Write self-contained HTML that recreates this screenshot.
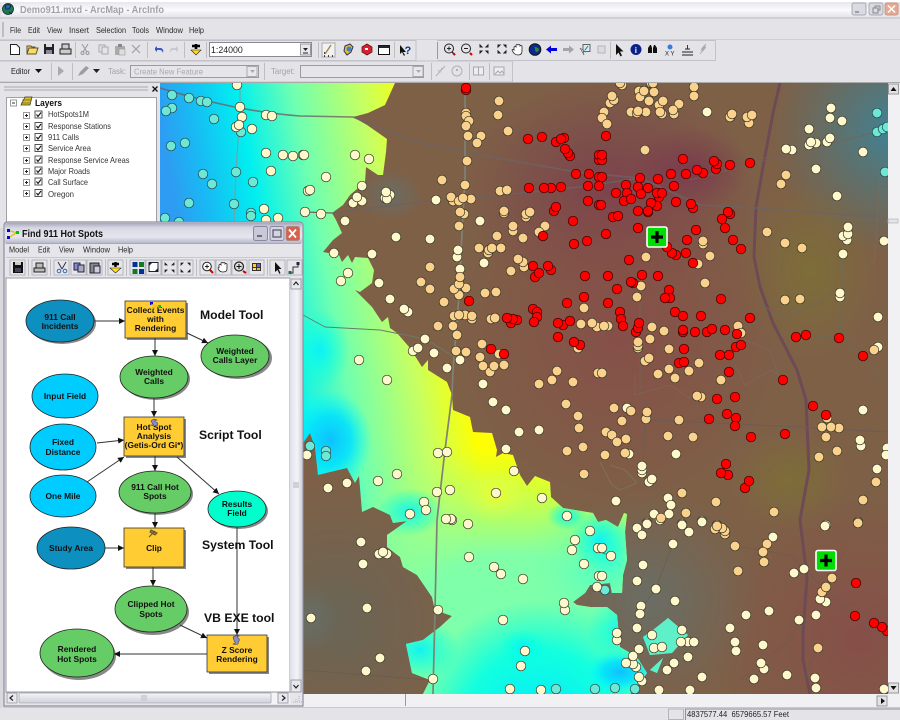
<!DOCTYPE html>
<html><head><meta charset="utf-8"><title>Demo911.mxd - ArcMap - ArcInfo</title>
<style>
html,body{margin:0;padding:0;background:#e4e3e8;width:900px;height:720px;overflow:hidden}
svg{display:block;filter:blur(.35px)}
text{font-family:"Liberation Sans",sans-serif;fill:#222}
.r circle{r:4.8px;fill:#f00;stroke:#300;stroke-width:.7}
.t circle{r:4.8px;fill:#fad28e;stroke:#332;stroke-width:.7}
.c circle{r:4.8px;fill:#fff8cc;stroke:#332;stroke-width:.7}
.y circle{r:4.8px;fill:#6ee8d6;stroke:#244;stroke-width:.7}
.mn text{font-size:8.6px;fill:#2a2a2a}
.tr text{font-size:8.2px;fill:#333}
.nd{font-size:8.4px;font-weight:bold;text-anchor:middle;fill:#111}
.lb{font-size:12.2px;font-weight:bold;fill:#111}
.ar{stroke:#333;stroke-width:1;fill:none;marker-end:url(#ah)}
.sh{fill:#888}
.e{stroke:#222;stroke-width:.8}
.b{fill:#ffcc33;stroke:#333;stroke-width:.8}
.tb{fill:#e6e6ea;stroke:#a9a9b2;stroke-width:.8}
</style></head><body>
<svg width="900" height="720" viewBox="0 0 900 720" xmlns="http://www.w3.org/2000/svg">
<defs>
<linearGradient id="sf" gradientUnits="userSpaceOnUse" x1="170" y1="180" x2="440" y2="130">
<stop offset="0" stop-color="#2e9cf2"/><stop offset=".12" stop-color="#18baf4"/><stop offset=".3" stop-color="#00f0f0"/><stop offset=".5" stop-color="#70ffb0"/><stop offset=".75" stop-color="#c8ff60"/><stop offset=".93" stop-color="#ffff00"/><stop offset="1" stop-color="#ffff00"/>
</linearGradient>
<radialGradient id="mint" gradientUnits="userSpaceOnUse" cx="510" cy="690" r="245"><stop offset="0" stop-color="#78ffb0"/><stop offset=".55" stop-color="#80ffa8"/><stop offset="1" stop-color="#a0ff80" stop-opacity="0"/></radialGradient>
<radialGradient id="mint2" gradientUnits="userSpaceOnUse" cx="610" cy="560" r="90"><stop offset="0" stop-color="#40ffd0"/><stop offset="1" stop-color="#80ffa8" stop-opacity="0"/></radialGradient>
<radialGradient id="cybot" gradientUnits="userSpaceOnUse" cx="540" cy="725" r="125"><stop offset="0" stop-color="#00e8ff"/><stop offset=".6" stop-color="#00ffe8" stop-opacity=".85"/><stop offset="1" stop-color="#00ffe0" stop-opacity="0"/></radialGradient>
<radialGradient id="cy"><stop offset="0" stop-color="#00f0ff" stop-opacity=".85"/><stop offset=".55" stop-color="#00ffe8" stop-opacity=".45"/><stop offset="1" stop-color="#00ffe0" stop-opacity="0"/></radialGradient>
<radialGradient id="bl"><stop offset="0" stop-color="#10c0ff"/><stop offset=".5" stop-color="#00e0ff" stop-opacity=".85"/><stop offset="1" stop-color="#00ffff" stop-opacity="0"/></radialGradient>
<radialGradient id="yl"><stop offset="0" stop-color="#eaff30"/><stop offset="1" stop-color="#d0ff60" stop-opacity="0"/></radialGradient>
<radialGradient id="rd"><stop offset="0" stop-color="#7a2e50" stop-opacity=".62"/><stop offset="1" stop-color="#7a2e50" stop-opacity="0"/></radialGradient>
<radialGradient id="rb"><stop offset="0" stop-color="#884c48" stop-opacity=".85"/><stop offset="1" stop-color="#884c48" stop-opacity="0"/></radialGradient>
<radialGradient id="rbU" gradientUnits="userSpaceOnUse" cx="860" cy="640" r="150"><stop offset="0" stop-color="#884c48" stop-opacity=".85"/><stop offset="1" stop-color="#884c48" stop-opacity="0"/></radialGradient>
<radialGradient id="bgU" gradientUnits="userSpaceOnUse" cx="895" cy="130" r="125"><stop offset="0" stop-color="#3e8398"/><stop offset="1" stop-color="#4a7a80" stop-opacity="0"/></radialGradient>
<radialGradient id="gyU" gradientUnits="userSpaceOnUse" cx="335" cy="620" r="140"><stop offset="0" stop-color="#666658" stop-opacity=".85"/><stop offset="1" stop-color="#666658" stop-opacity="0"/></radialGradient>
<radialGradient id="gy"><stop offset="0" stop-color="#66706a" stop-opacity=".85"/><stop offset="1" stop-color="#66706a" stop-opacity="0"/></radialGradient>
<radialGradient id="ol"><stop offset="0" stop-color="#7c7432" stop-opacity=".7"/><stop offset="1" stop-color="#7c7432" stop-opacity="0"/></radialGradient>
<clipPath id="mc"><rect x="160" y="83" width="728" height="611"/></clipPath>
<clipPath id="pc"><path d="M160 83H395L385 105 368 113 353 117 367 125 387 139 386 152 383 175 378 175 366 167 365 182 350 195 343 205 332 213 336 220 342 233 333 240 323 252 339 255 342 262 348 255 352 263 355 257 368 258 374 270 372 283 360 292 355 290 372 307 382 322 388 317 390 328 397 333 410 348 422 367 428 360 428 370 447 382 452 395 453 410 470 417 473 432 492 433 497 450 496 457 503 453 513 455 520 475 527 486 535 476 550 482 551 497 563 508 593 513 598 522 606 520 618 527 624 513 627 514 625 532 627 560 623 575 622 593 612 593 610 583 590 585 585 593 573 602 577 605 590 607 607 607 617 615 620 647 637 657 647 673 637 687 630 694H423L430 680 412 673 406 644 423 640 440 627 452 616 435 610 432 597 417 575 403 567 400 557 387 547 387 535 407 521 393 523 390 515 373 507 362 512 359 476 355 483 347 468 330 472 318 475 315 447 310 433 303 443 160 445ZM668 618L688 635 672 653 650 655 643 637 653 630ZM663 658L650 670 657 673Z"/></clipPath>
<marker id="ah" markerWidth="7" markerHeight="7" refX="6" refY="3" orient="auto" markerUnits="userSpaceOnUse"><path d="M0 0L6 3 0 6Z" fill="#111"/></marker>
<linearGradient id="tt" x1="0" y1="0" x2="0" y2="1"><stop offset="0" stop-color="#e6e6ee"/><stop offset=".5" stop-color="#fbfbfd"/><stop offset="1" stop-color="#e0e0e8"/></linearGradient>
<linearGradient id="wt" x1="0" y1="0" x2="0" y2="1"><stop offset="0" stop-color="#a8a8be"/><stop offset=".25" stop-color="#d8d8e4"/><stop offset=".7" stop-color="#e6e6ee"/><stop offset="1" stop-color="#b8b8cc"/></linearGradient>
<linearGradient id="vb" x1="0" y1="0" x2="1" y2="0"><stop offset="0" stop-color="#dfe0e8"/><stop offset=".6" stop-color="#f4f4f8"/><stop offset="1" stop-color="#d0d0da"/></linearGradient>
<linearGradient id="hb" x1="0" y1="0" x2="0" y2="1"><stop offset="0" stop-color="#f4f4f8"/><stop offset="1" stop-color="#d0d0da"/></linearGradient>
</defs>

<!-- MAP -->
<g clip-path="url(#mc)">
<rect x="160" y="83" width="728" height="611" fill="#7e6047"/>
<ellipse cx="610" cy="190" rx="150" ry="115" fill="url(#rd)"/>
<ellipse cx="690" cy="170" rx="60" ry="42" fill="url(#rd)"/>
<ellipse cx="620" cy="330" rx="170" ry="180" fill="url(#rb)"/>
<rect x="710" y="490" width="178" height="204" fill="url(#rbU)"/>
<rect x="770" y="83" width="118" height="175" fill="url(#bgU)"/>
<rect x="195" y="480" width="280" height="214" fill="url(#gyU)"/>
<ellipse cx="650" cy="600" rx="110" ry="110" fill="url(#gy)"/>
<ellipse cx="390" cy="195" rx="32" ry="26" fill="url(#gy)"/>
<ellipse cx="311" cy="618" rx="28" ry="34" fill="url(#gy)"/>
<ellipse cx="810" cy="270" rx="70" ry="90" fill="url(#ol)"/>
<ellipse cx="790" cy="480" rx="60" ry="50" fill="url(#ol)"/>
<g clip-path="url(#pc)">
<rect x="160" y="83" width="480" height="611" fill="url(#sf)"/>
<rect x="265" y="445" width="490" height="249" fill="url(#mint)"/>
<rect x="520" y="470" width="180" height="180" fill="url(#mint2)"/>
<rect x="415" y="600" width="240" height="94" fill="url(#cybot)"/>
<rect x="640" y="615" width="50" height="60" fill="#5ef0c8"/>
<ellipse cx="620" cy="672" rx="34" ry="22" fill="url(#bl)"/>
<ellipse cx="622" cy="630" rx="36" ry="30" fill="url(#cy)"/>
<ellipse cx="420" cy="650" rx="40" ry="30" fill="url(#cy)"/>
<ellipse cx="330" cy="440" rx="42" ry="50" fill="url(#bl)"/>
<ellipse cx="320" cy="350" rx="30" ry="40" fill="url(#cy)"/>
<ellipse cx="410" cy="512" rx="34" ry="24" fill="url(#cy)"/>
<ellipse cx="567" cy="516" rx="20" ry="14" fill="url(#cy)"/>
<ellipse cx="600" cy="540" rx="30" ry="30" fill="url(#cy)"/>
<ellipse cx="523" cy="647" rx="24" ry="18" fill="url(#cy)"/>
<ellipse cx="496" cy="495" rx="36" ry="26" fill="url(#yl)"/>
</g>
<!-- roads -->
<g fill="none" stroke-linejoin="round">
<path d="M780 83L773 113 763 167 756 207 754 257 760 287 773 323 797 370 806 400 809 470 800 520 807 577 803 633 803 660 810 694" stroke="#6e4a55" stroke-width="3"/>
<path d="M160 88Q240 112 300 116L353 117 410 140 465 152 575 172 640 178 700 205 756 208 888 218" stroke="#6b6466" stroke-width="1.6" opacity=".8"/>
<path d="M465 88L465 180 463 212 459 295 453 370 452 395 445 450 437 520 435 610 433 694" stroke="#7f8276" stroke-width="1.7"/>
<path d="M240 85L240 107 238 140 236 172 234 222" stroke="#6aa8a8" stroke-width="1.2"/>
<path d="M305 212L332 213 436 200 500 195 580 187 640 178" stroke="#6a6264" stroke-width="1.2"/>
<path d="M303 315L325 327 380 330 425 339 460 360" stroke="#6c7a68" stroke-width=".9"/>
<path d="M303 670L430 680" stroke="#6a5a50" stroke-width=".7"/>
<path d="M877 132L690 180M786 150L760 160" stroke="#7a6058" stroke-width=".8"/>
<path d="M847 215L843 254 840 338 863 356 885 385M806 335L839 338M757 300L775 315 800 312 840 290M720 340L760 320M640 290L640 395" stroke="#6a6a5c" stroke-width=".7"/>
<path d="M735 546L790 555 826 590 855 616 888 640M673 544L655 590 640 610M740 680L790 640 800 620M816 648L805 680M845 550L826 585M600 552L611 556" stroke="#6e5a50" stroke-width=".7"/>
<path d="M745 340L770 350 778 375 772 370 745 385 735 365M635 375L635 395 670 385 690 398M880 170L875 260 865 270" stroke="#7f6a5c" stroke-width=".6"/>
<path d="M645 400L645 418 643 470M650 420L800 427 886 432" stroke="#6c5c56" stroke-width=".9"/>
<path d="M880 462L863 500 858 522M650 485L670 502 700 522" stroke="#6e6250" stroke-width=".7"/>
<path d="M610 465L625 470 637 483 620 490 612 485 600 462" stroke="#7c7f60" stroke-width=".6"/>
</g>
<g class="y"><circle cx="172" cy="95"/><circle cx="189" cy="98"/><circle cx="201" cy="101"/><circle cx="207" cy="102"/><circle cx="172" cy="108"/><circle cx="166" cy="111"/><circle cx="214" cy="119"/><circle cx="171" cy="146"/><circle cx="185" cy="143"/><circle cx="203" cy="174"/><circle cx="212" cy="184"/><circle cx="236" cy="172"/><circle cx="253" cy="182"/><circle cx="189" cy="203"/><circle cx="234" cy="204"/><circle cx="251" cy="213"/><circle cx="251" cy="216"/><circle cx="165" cy="218"/><circle cx="179" cy="222"/><circle cx="241" cy="132"/><circle cx="877" cy="113"/><circle cx="877" cy="132"/><circle cx="883" cy="129"/><circle cx="887" cy="127"/><circle cx="885" cy="172"/><circle cx="310" cy="446"/><circle cx="326" cy="451"/><circle cx="326" cy="456"/><circle cx="615" cy="688"/><circle cx="635" cy="689"/><circle cx="605" cy="590"/><circle cx="556" cy="689"/><circle cx="595" cy="689"/></g>
<g class="c"><circle cx="237" cy="85"/><circle cx="240" cy="107"/><circle cx="242" cy="117"/><circle cx="236" cy="127"/><circle cx="239" cy="125"/><circle cx="252" cy="129"/><circle cx="266" cy="115"/><circle cx="272" cy="116"/><circle cx="266" cy="153"/><circle cx="283" cy="155"/><circle cx="293" cy="156"/><circle cx="303" cy="155"/><circle cx="271" cy="171"/><circle cx="308" cy="191"/><circle cx="305" cy="212"/><circle cx="264" cy="209"/><circle cx="266" cy="220"/><circle cx="278" cy="218"/><circle cx="304" cy="155"/><circle cx="355" cy="155"/><circle cx="369" cy="159"/><circle cx="326" cy="177"/><circle cx="310" cy="190"/><circle cx="362" cy="186"/><circle cx="353" cy="203"/><circle cx="362" cy="201"/><circle cx="357" cy="197"/><circle cx="390" cy="195"/><circle cx="385" cy="198"/><circle cx="387" cy="199"/><circle cx="386" cy="192"/><circle cx="436" cy="200"/><circle cx="321" cy="214"/><circle cx="345" cy="221"/><circle cx="480" cy="221"/><circle cx="396" cy="237"/><circle cx="430" cy="239"/><circle cx="334" cy="253"/><circle cx="372" cy="254"/><circle cx="457" cy="257"/><circle cx="458" cy="250"/><circle cx="484" cy="263"/><circle cx="460" cy="269"/><circle cx="348" cy="273"/><circle cx="341" cy="281"/><circle cx="379" cy="283"/><circle cx="390" cy="299"/><circle cx="408" cy="312"/><circle cx="404" cy="309"/><circle cx="425" cy="339"/><circle cx="413" cy="351"/><circle cx="418" cy="348"/><circle cx="434" cy="353"/><circle cx="460" cy="360"/><circle cx="359" cy="360"/><circle cx="387" cy="380"/><circle cx="447" cy="368"/><circle cx="483" cy="384"/>
<circle cx="707" cy="112"/><circle cx="831" cy="108"/><circle cx="830" cy="118"/><circle cx="842" cy="121"/><circle cx="809" cy="129"/><circle cx="827" cy="142"/><circle cx="830" cy="138"/><circle cx="809" cy="145"/><circle cx="816" cy="143"/><circle cx="811" cy="142"/><circle cx="792" cy="150"/><circle cx="786" cy="149"/><circle cx="863" cy="152"/><circle cx="816" cy="169"/><circle cx="837" cy="196"/><circle cx="847" cy="240"/><circle cx="843" cy="236"/><circle cx="848" cy="234"/><circle cx="848" cy="227"/><circle cx="843" cy="254"/><circle cx="884" cy="241"/><circle cx="840" cy="297"/><circle cx="840" cy="293"/><circle cx="878" cy="317"/><circle cx="878" cy="347"/>
<circle cx="627" cy="408"/><circle cx="629" cy="454"/><circle cx="676" cy="454"/><circle cx="863" cy="410"/><circle cx="861" cy="446"/><circle cx="860" cy="440"/><circle cx="887" cy="448"/><circle cx="886" cy="455"/><circle cx="877" cy="469"/><circle cx="642" cy="473"/><circle cx="642" cy="470"/><circle cx="642" cy="466"/><circle cx="649" cy="482"/><circle cx="652" cy="479"/><circle cx="616" cy="501"/><circle cx="668" cy="498"/><circle cx="671" cy="505"/><circle cx="654" cy="514"/><circle cx="669" cy="514"/><circle cx="647" cy="523"/><circle cx="682" cy="524"/><circle cx="702" cy="521"/><circle cx="826" cy="525"/>
<circle cx="493" cy="402"/><circle cx="506" cy="410"/><circle cx="519" cy="432"/><circle cx="539" cy="430"/><circle cx="506" cy="449"/><circle cx="514" cy="471"/><circle cx="542" cy="498"/><circle cx="567" cy="516"/><circle cx="590" cy="531"/><circle cx="575" cy="540"/><circle cx="572" cy="550"/><circle cx="598" cy="548"/><circle cx="584" cy="564"/><circle cx="599" cy="576"/><circle cx="597" cy="587"/><circle cx="565" cy="610"/><circle cx="564" cy="603"/><circle cx="503" cy="620"/><circle cx="525" cy="651"/><circle cx="521" cy="666"/><circle cx="510" cy="689"/><circle cx="438" cy="453"/><circle cx="447" cy="452"/><circle cx="397" cy="474"/><circle cx="378" cy="481"/><circle cx="347" cy="483"/><circle cx="328" cy="488"/><circle cx="307" cy="455"/><circle cx="437" cy="492"/><circle cx="450" cy="490"/><circle cx="496" cy="493"/><circle cx="424" cy="502"/><circle cx="426" cy="510"/><circle cx="410" cy="514"/><circle cx="452" cy="520"/><circle cx="451" cy="519"/><circle cx="446" cy="519"/><circle cx="468" cy="524"/><circle cx="361" cy="542"/><circle cx="379" cy="554"/><circle cx="387" cy="554"/><circle cx="383" cy="552"/><circle cx="469" cy="557"/><circle cx="363" cy="564"/><circle cx="494" cy="567"/><circle cx="501" cy="574"/><circle cx="523" cy="579"/><circle cx="367" cy="608"/><circle cx="438" cy="610"/><circle cx="311" cy="618"/><circle cx="380" cy="658"/><circle cx="366" cy="671"/><circle cx="433" cy="679"/><circle cx="541" cy="690"/>
<circle cx="637" cy="528"/><circle cx="647" cy="524"/><circle cx="642" cy="535"/><circle cx="660" cy="520"/><circle cx="682" cy="525"/><circle cx="689" cy="532"/><circle cx="702" cy="522"/><circle cx="673" cy="544"/><circle cx="611" cy="556"/><circle cx="643" cy="565"/><circle cx="602" cy="548"/><circle cx="602" cy="576"/><circle cx="637" cy="581"/><circle cx="656" cy="589"/><circle cx="675" cy="601"/><circle cx="641" cy="606"/><circle cx="640" cy="614"/><circle cx="637" cy="628"/><circle cx="617" cy="640"/><circle cx="617" cy="633"/><circle cx="652" cy="635"/><circle cx="654" cy="648"/><circle cx="662" cy="647"/><circle cx="682" cy="630"/><circle cx="688" cy="642"/><circle cx="681" cy="642"/><circle cx="694" cy="642"/><circle cx="639" cy="649"/><circle cx="636" cy="667"/><circle cx="633" cy="664"/><circle cx="626" cy="663"/><circle cx="633" cy="656"/><circle cx="642" cy="681"/><circle cx="639" cy="677"/><circle cx="674" cy="663"/><circle cx="667" cy="670"/><circle cx="688" cy="657"/><circle cx="702" cy="677"/><circle cx="659" cy="690"/><circle cx="690" cy="690"/><circle cx="730" cy="628"/><circle cx="746" cy="615"/><circle cx="769" cy="611"/><circle cx="799" cy="620"/><circle cx="816" cy="615"/><circle cx="736" cy="651"/><circle cx="735" cy="642"/><circle cx="763" cy="645"/><circle cx="764" cy="669"/><circle cx="761" cy="663"/><circle cx="754" cy="679"/><circle cx="787" cy="675"/><circle cx="815" cy="678"/><circle cx="816" cy="688"/><circle cx="884" cy="689"/><circle cx="773" cy="537"/><circle cx="825" cy="526"/><circle cx="794" cy="573"/><circle cx="804" cy="569"/><circle cx="826" cy="602"/><circle cx="820" cy="599"/></g>
<g class="t"><circle cx="622" cy="85"/><circle cx="651" cy="83"/><circle cx="620" cy="83"/><circle cx="694" cy="83"/><circle cx="499" cy="101"/><circle cx="498" cy="115"/><circle cx="508" cy="131"/><circle cx="466" cy="113"/><circle cx="466" cy="116"/><circle cx="469" cy="121"/><circle cx="466" cy="126"/><circle cx="468" cy="136"/><circle cx="481" cy="136"/><circle cx="477" cy="143"/><circle cx="467" cy="161"/><circle cx="442" cy="180"/><circle cx="465" cy="185"/><circle cx="500" cy="191"/><circle cx="507" cy="190"/><circle cx="453" cy="201"/><circle cx="451" cy="197"/><circle cx="471" cy="199"/><circle cx="459" cy="201"/><circle cx="463" cy="198"/><circle cx="464" cy="214"/><circle cx="460" cy="212"/><circle cx="459" cy="226"/><circle cx="504" cy="213"/><circle cx="504" cy="211"/><circle cx="526" cy="217"/><circle cx="526" cy="214"/><circle cx="530" cy="212"/><circle cx="545" cy="226"/><circle cx="539" cy="232"/><circle cx="513" cy="231"/><circle cx="513" cy="226"/><circle cx="497" cy="236"/><circle cx="523" cy="238"/><circle cx="479" cy="248"/><circle cx="488" cy="253"/><circle cx="489" cy="250"/><circle cx="492" cy="248"/><circle cx="501" cy="248"/><circle cx="524" cy="267"/><circle cx="523" cy="262"/><circle cx="518" cy="259"/><circle cx="511" cy="271"/><circle cx="430" cy="267"/><circle cx="421" cy="282"/><circle cx="430" cy="289"/><circle cx="459" cy="295"/><circle cx="466" cy="288"/><circle cx="454" cy="289"/><circle cx="459" cy="284"/><circle cx="460" cy="277"/><circle cx="485" cy="293"/><circle cx="496" cy="292"/><circle cx="444" cy="302"/><circle cx="584" cy="308"/><circle cx="472" cy="319"/><circle cx="454" cy="316"/><circle cx="465" cy="315"/><circle cx="459" cy="315"/><circle cx="472" cy="316"/><circle cx="491" cy="319"/><circle cx="495" cy="318"/><circle cx="438" cy="326"/><circle cx="453" cy="326"/><circle cx="457" cy="335"/><circle cx="581" cy="324"/><circle cx="597" cy="327"/><circle cx="592" cy="323"/><circle cx="482" cy="344"/><circle cx="456" cy="351"/><circle cx="466" cy="352"/><circle cx="480" cy="357"/><circle cx="499" cy="354"/><circle cx="578" cy="348"/><circle cx="490" cy="372"/><circle cx="483" cy="366"/><circle cx="494" cy="366"/><circle cx="504" cy="365"/><circle cx="557" cy="371"/><circle cx="552" cy="380"/><circle cx="539" cy="384"/><circle cx="573" cy="382"/><circle cx="598" cy="373"/>
<circle cx="610" cy="103"/><circle cx="614" cy="100"/><circle cx="612" cy="96"/><circle cx="639" cy="91"/><circle cx="640" cy="97"/><circle cx="644" cy="91"/><circle cx="654" cy="92"/><circle cx="649" cy="101"/><circle cx="659" cy="105"/><circle cx="663" cy="101"/><circle cx="679" cy="104"/><circle cx="694" cy="87"/><circle cx="694" cy="96"/><circle cx="653" cy="83"/><circle cx="631" cy="112"/><circle cx="637" cy="113"/><circle cx="646" cy="112"/><circle cx="638" cy="111"/><circle cx="662" cy="114"/><circle cx="660" cy="112"/><circle cx="674" cy="114"/><circle cx="673" cy="110"/><circle cx="604" cy="112"/><circle cx="602" cy="118"/><circle cx="607" cy="124"/><circle cx="730" cy="117"/><circle cx="732" cy="114"/><circle cx="749" cy="123"/><circle cx="747" cy="117"/><circle cx="752" cy="115"/><circle cx="645" cy="150"/><circle cx="786" cy="175"/><circle cx="781" cy="184"/><circle cx="767" cy="232"/><circle cx="785" cy="243"/><circle cx="802" cy="248"/><circle cx="703" cy="244"/><circle cx="703" cy="241"/><circle cx="710" cy="256"/><circle cx="646" cy="257"/><circle cx="698" cy="264"/><circle cx="705" cy="283"/><circle cx="641" cy="286"/><circle cx="637" cy="297"/><circle cx="785" cy="300"/><circle cx="800" cy="299"/><circle cx="608" cy="326"/><circle cx="604" cy="326"/><circle cx="652" cy="327"/><circle cx="664" cy="331"/><circle cx="650" cy="339"/><circle cx="638" cy="348"/><circle cx="638" cy="346"/><circle cx="638" cy="342"/><circle cx="738" cy="326"/><circle cx="741" cy="333"/><circle cx="669" cy="349"/><circle cx="645" cy="361"/><circle cx="649" cy="358"/><circle cx="699" cy="363"/><circle cx="669" cy="369"/><circle cx="689" cy="371"/><circle cx="658" cy="374"/><circle cx="675" cy="378"/><circle cx="602" cy="373"/><circle cx="721" cy="380"/><circle cx="701" cy="397"/><circle cx="697" cy="396"/><circle cx="874" cy="350"/>
<circle cx="614" cy="408"/><circle cx="631" cy="411"/><circle cx="646" cy="419"/><circle cx="647" cy="412"/><circle cx="622" cy="421"/><circle cx="679" cy="420"/><circle cx="606" cy="432"/><circle cx="612" cy="435"/><circle cx="626" cy="439"/><circle cx="617" cy="442"/><circle cx="668" cy="436"/><circle cx="693" cy="437"/><circle cx="605" cy="455"/><circle cx="625" cy="453"/><circle cx="827" cy="418"/><circle cx="839" cy="428"/><circle cx="831" cy="427"/><circle cx="822" cy="427"/><circle cx="826" cy="437"/><circle cx="837" cy="451"/><circle cx="819" cy="457"/><circle cx="876" cy="482"/><circle cx="863" cy="500"/><circle cx="682" cy="493"/><circle cx="716" cy="502"/><circle cx="686" cy="513"/><circle cx="774" cy="512"/><circle cx="858" cy="522"/><circle cx="717" cy="525"/><circle cx="661" cy="518"/>
<circle cx="566" cy="404"/><circle cx="578" cy="416"/><circle cx="579" cy="428"/><circle cx="583" cy="447"/><circle cx="567" cy="451"/><circle cx="584" cy="474"/><circle cx="725" cy="534"/><circle cx="725" cy="531"/><circle cx="722" cy="528"/><circle cx="715" cy="529"/><circle cx="717" cy="526"/><circle cx="735" cy="546"/><circle cx="767" cy="544"/><circle cx="763" cy="552"/><circle cx="764" cy="562"/><circle cx="738" cy="571"/><circle cx="832" cy="578"/><circle cx="822" cy="592"/><circle cx="826" cy="587"/><circle cx="818" cy="648"/><circle cx="858" cy="523"/></g>
<g class="r"><circle cx="466" cy="90"/><circle cx="466" cy="88"/><circle cx="528" cy="139"/><circle cx="542" cy="137"/><circle cx="556" cy="142"/><circle cx="564" cy="138"/><circle cx="561" cy="139"/><circle cx="570" cy="156"/><circle cx="568" cy="153"/><circle cx="565" cy="149"/><circle cx="599" cy="160"/><circle cx="599" cy="155"/><circle cx="576" cy="174"/><circle cx="589" cy="174"/><circle cx="599" cy="177"/><circle cx="588" cy="186"/><circle cx="599" cy="186"/><circle cx="529" cy="188"/><circle cx="551" cy="188"/><circle cx="544" cy="188"/><circle cx="561" cy="187"/><circle cx="588" cy="201"/><circle cx="599" cy="205"/><circle cx="554" cy="211"/><circle cx="556" cy="207"/><circle cx="573" cy="221"/><circle cx="543" cy="236"/><circle cx="574" cy="244"/><circle cx="587" cy="241"/><circle cx="533" cy="266"/><circle cx="551" cy="270"/><circle cx="548" cy="266"/><circle cx="535" cy="277"/><circle cx="539" cy="273"/><circle cx="585" cy="276"/><circle cx="469" cy="301"/><circle cx="584" cy="297"/><circle cx="567" cy="303"/><circle cx="533" cy="309"/><circle cx="537" cy="312"/><circle cx="537" cy="317"/><circle cx="534" cy="322"/><circle cx="511" cy="323"/><circle cx="517" cy="320"/><circle cx="513" cy="319"/><circle cx="507" cy="318"/><circle cx="563" cy="325"/><circle cx="558" cy="323"/><circle cx="570" cy="321"/><circle cx="558" cy="337"/><circle cx="580" cy="345"/><circle cx="574" cy="342"/><circle cx="491" cy="349"/><circle cx="504" cy="354"/>
<circle cx="606" cy="136"/><circle cx="602" cy="160"/><circle cx="602" cy="155"/><circle cx="683" cy="159"/><circle cx="716" cy="169"/><circle cx="717" cy="164"/><circle cx="714" cy="161"/><circle cx="730" cy="165"/><circle cx="750" cy="163"/><circle cx="703" cy="173"/><circle cx="697" cy="170"/><circle cx="686" cy="174"/><circle cx="671" cy="174"/><circle cx="640" cy="178"/><circle cx="658" cy="179"/><circle cx="602" cy="177"/><circle cx="674" cy="186"/><circle cx="626" cy="185"/><circle cx="638" cy="187"/><circle cx="648" cy="188"/><circle cx="616" cy="193"/><circle cx="627" cy="193"/><circle cx="641" cy="194"/><circle cx="659" cy="197"/><circle cx="657" cy="193"/><circle cx="662" cy="193"/><circle cx="624" cy="201"/><circle cx="631" cy="199"/><circle cx="676" cy="202"/><circle cx="657" cy="206"/><circle cx="651" cy="203"/><circle cx="693" cy="208"/><circle cx="691" cy="204"/><circle cx="601" cy="205"/><circle cx="638" cy="211"/><circle cx="648" cy="212"/><circle cx="648" cy="211"/><circle cx="730" cy="214"/><circle cx="728" cy="212"/><circle cx="722" cy="219"/><circle cx="613" cy="217"/><circle cx="618" cy="216"/><circle cx="725" cy="228"/><circle cx="638" cy="228"/><circle cx="696" cy="230"/><circle cx="606" cy="234"/><circle cx="687" cy="240"/><circle cx="733" cy="240"/><circle cx="741" cy="249"/><circle cx="676" cy="255"/><circle cx="672" cy="253"/><circle cx="667" cy="247"/><circle cx="686" cy="253"/><circle cx="629" cy="260"/><circle cx="693" cy="263"/><circle cx="608" cy="276"/><circle cx="642" cy="275"/><circle cx="658" cy="276"/><circle cx="633" cy="283"/><circle cx="631" cy="282"/><circle cx="617" cy="289"/><circle cx="669" cy="290"/><circle cx="670" cy="298"/><circle cx="665" cy="298"/><circle cx="721" cy="299"/><circle cx="608" cy="303"/><circle cx="620" cy="312"/><circle cx="675" cy="312"/><circle cx="683" cy="316"/><circle cx="701" cy="316"/><circle cx="750" cy="318"/><circle cx="621" cy="319"/><circle cx="623" cy="326"/><circle cx="636" cy="332"/><circle cx="638" cy="328"/><circle cx="639" cy="323"/><circle cx="683" cy="332"/><circle cx="683" cy="330"/><circle cx="695" cy="332"/><circle cx="707" cy="332"/><circle cx="712" cy="329"/><circle cx="725" cy="330"/><circle cx="737" cy="334"/><circle cx="796" cy="337"/><circle cx="806" cy="335"/><circle cx="839" cy="338"/><circle cx="736" cy="347"/><circle cx="741" cy="345"/><circle cx="684" cy="349"/><circle cx="863" cy="356"/><circle cx="720" cy="355"/><circle cx="729" cy="355"/><circle cx="679" cy="363"/><circle cx="684" cy="362"/><circle cx="729" cy="372"/><circle cx="783" cy="380"/><circle cx="717" cy="399"/><circle cx="735" cy="397"/><circle cx="709" cy="419"/><circle cx="727" cy="414"/><circle cx="736" cy="418"/><circle cx="735" cy="426"/><circle cx="751" cy="437"/><circle cx="785" cy="434"/><circle cx="813" cy="406"/><circle cx="826" cy="415"/><circle cx="726" cy="464"/><circle cx="728" cy="475"/><circle cx="721" cy="473"/><circle cx="745" cy="488"/><circle cx="749" cy="481"/><circle cx="856" cy="583"/><circle cx="855" cy="616"/><circle cx="887" cy="631"/><circle cx="882" cy="627"/><circle cx="874" cy="623"/></g>
<g><rect x="647" y="227" width="20" height="20" rx="2" fill="#0d0" stroke="#fff" stroke-width="1.6"/><path d="M657 231v12M651 237h12" stroke="#000" stroke-width="3.2"/></g>
<g><rect x="816" y="550.5" width="20" height="20" rx="2" fill="#0d0" stroke="#fff" stroke-width="1.6"/><path d="M826 554.5v12M820 560.5h12" stroke="#000" stroke-width="3.2"/></g>
</g>

<!-- MAIN CHROME -->
<rect x="0" y="0" width="900" height="83" fill="#e4e3e8"/>
<rect x="0" y="0" width="900" height="2" fill="#fff"/>
<rect x="2" y="2" width="896" height="16" fill="url(#tt)"/>
<line x1="0" y1="18" x2="900" y2="18" stroke="#bdbdc4"/>
<circle cx="8" cy="9" r="5.5" fill="#1c7a50" stroke="#123" stroke-width=".8"/><path d="M5 6q3-3 6 0l-2 3-3 0zM9 12l3 2" fill="#2a5fb8" stroke="#123" stroke-width=".8"/>
<text x="20" y="13" font-size="9.7" font-weight="bold" style="fill:#a2a2aa" textLength="144" lengthAdjust="spacingAndGlyphs">Demo911.mxd - ArcMap - ArcInfo</text>
<g><rect x="852" y="3" width="14" height="12" rx="2" fill="#dadae2" stroke="#a8a8b4"/><path d="M855 12h4" stroke="#777" stroke-width="1.2"/><rect x="869" y="3" width="14" height="12" rx="2" fill="#dadae2" stroke="#a8a8b4"/><path d="M873 8h5v5h-5zM875 8v-2h5v4h-2" fill="none" stroke="#888"/><rect x="885" y="3" width="13" height="12" rx="2" fill="#e6a890" stroke="#c89888"/><path d="M888 5.500l7 7M895 5.500l-7 7" stroke="#fff" stroke-width="1.5"/></g>
<line x1="3" y1="22" x2="3" y2="37" stroke="#999" /><line x1="0" y1="39.5" x2="900" y2="39.5" stroke="#cfcfd4"/>
<g class="mn"><text x="10" y="33" textLength="11" lengthAdjust="spacingAndGlyphs">File</text><text x="28" y="33" textLength="12" lengthAdjust="spacingAndGlyphs">Edit</text><text x="47" y="33" textLength="15" lengthAdjust="spacingAndGlyphs">View</text><text x="69" y="33" textLength="20" lengthAdjust="spacingAndGlyphs">Insert</text><text x="96" y="33" textLength="30" lengthAdjust="spacingAndGlyphs">Selection</text><text x="132" y="33" textLength="17" lengthAdjust="spacingAndGlyphs">Tools</text><text x="156" y="33" textLength="27" lengthAdjust="spacingAndGlyphs">Window</text><text x="189" y="33" textLength="15" lengthAdjust="spacingAndGlyphs">Help</text></g>
<path d="M0 40.5H416V60.5H0M437 40.5H715.5V60.5H437" fill="none" stroke="#c2c2c8"/>
<path d="M0 61H512.5V82H0" fill="none" stroke="#c2c2c8"/>
<line x1="0" y1="82.5" x2="900" y2="82.5" stroke="#aaa"/>
<!-- toolbar1 left -->
<g>
<path d="M10.5 44.5h6l3 3v7h-9z" fill="#fff" stroke="#222"/>
<path d="M27 54l2-6h9l-2 6zM27 54v-8h4l1 1h3v1" fill="#ffd860" stroke="#553"/>
<rect x="44" y="44" width="10" height="10" fill="#222"/><rect x="46" y="44" width="6" height="3" fill="#ddd"/><rect x="46" y="50" width="6" height="4" fill="#889"/>
<path d="M60 49h11v5h-11zM62 44h7v5h-7z" fill="#ccc" stroke="#222"/>
<path d="M82 44l5 8M88 44l-5 8" stroke="#999" fill="none"/><circle cx="82.5" cy="53" r="1.5" fill="none" stroke="#999"/><circle cx="87.5" cy="53" r="1.5" fill="none" stroke="#999"/>
<rect x="99" y="45" width="6" height="7" fill="#e4e4e8" stroke="#aaa"/><rect x="102" y="47" width="6" height="7" fill="#e4e4e8" stroke="#aaa"/>
<rect x="115" y="46" width="10" height="9" fill="#aaa"/><rect x="118" y="44" width="4" height="3" fill="#888"/><rect x="119" y="49" width="6" height="6" fill="#ddd" stroke="#999" stroke-width=".6"/>
<path d="M132 45l8 8M140 45l-8 8" stroke="#a0a0a6" stroke-width="1.2"/>
<path d="M155 48l2-2v2h4q3 1 2 5-1-3-3-3h-3v2l-2-2" fill="#3a56c0"/>
<path d="M178 48l-2-2v2h-4q-3 1-2 5 1-3 3-3h3v2l2-2" fill="#c8c8ce"/>
<path d="M196 44v5M192 46h8" stroke="#000" stroke-width="2.6"/><path d="M191 50h10l-5 5z" fill="#ffd820" stroke="#222" stroke-width=".6"/>
<g stroke="#bdbdc2"><line x1="75.5" y1="42" x2="75.5" y2="58"/><line x1="147.5" y1="42" x2="147.5" y2="58"/><line x1="184.5" y1="42" x2="184.5" y2="58"/><line x1="206.5" y1="42" x2="206.5" y2="58"/><line x1="318.5" y1="42" x2="318.5" y2="58"/><line x1="394.5" y1="42" x2="394.5" y2="58"/></g>
<rect x="209.5" y="42.5" width="102" height="14" fill="#fff" stroke="#8a8a92"/><text x="211" y="53" font-size="8.8" style="fill:#222">1:24000</text>
<rect x="300.5" y="44" width="10" height="11" fill="#e8e8ec" stroke="#999"/><path d="M303 48h5l-2.500 3z" fill="#222"/><path d="M303 53h5" stroke="#222"/>
<rect x="322" y="43" width="13" height="14" fill="#f2f2f4" stroke="#aaa"/><path d="M325 54l6-9" stroke="#a84" stroke-width="1.5"/><path d="M324 56h1M328 56h1M332 56h1M324 53h1" stroke="#111" stroke-width="1.6"/>
<path d="M345 46l5-2 3 3-2 5-4 3-3-4z" fill="#d8c040" stroke="#335"/><circle cx="349" cy="49" r="2.5" fill="#4a7ac0"/>
<path d="M362 47l5-3 5 3v5l-5 3-5-3z" fill="#d82030" stroke="#611" stroke-width=".8"/><rect x="365" y="48" width="3" height="2" fill="#fff"/>
<rect x="378.5" y="45.5" width="11" height="9" fill="#fff" stroke="#111"/><rect x="378.5" y="45.5" width="11" height="2.5" fill="#223"/>
<path d="M400 45v9l2-2 2 4 1-1-2-3h3z" fill="#111"/><text x="404.5" y="54" font-size="11" font-weight="bold" style="fill:#003a8c">?</text>
</g>
<!-- toolbar1 right -->
<g fill="none" stroke="#222">
<line x1="437.5" y1="42" x2="437.5" y2="59" stroke="#999"/>
<circle cx="449" cy="48.5" r="4.5"/><path d="M447 48.500h4M449 46.500v4M452 52l3 3" /><path d="M453 53l2 2" stroke="#c00" stroke-width="2"/>
<circle cx="466" cy="48.5" r="4.5"/><path d="M464 48.500h4"/><path d="M470 53l2 2" stroke="#c00" stroke-width="2"/>
<path d="M480 45l2 2h-2zM488 45l-2 2h2zM480 53l2-2h-2zM488 53l-2-2h2zM498 47v-2h2zM506 47v-2h-2zM498 51v2h2zM506 51v2h-2z" fill="#222"/>
<path d="M514 50v-3q1-1 2 0v-2q1-1 2 0v0q1-1 2 0v1q1-1 2 0v5q0 4-4 4t-6-5q1-1 2 0z" fill="#fff" stroke="#222" stroke-width=".8"/>
<circle cx="535" cy="49.5" r="5.8" fill="#0b2a8c" stroke="#111"/><path d="M532 46q3 0 3 3t2 3q2-1 2-3-2-2-4-2z" fill="#2c8a30" stroke="none"/>
<path d="M546 49.500l5-4v2.500h6v3h-6v2.500z" fill="#0000e0" stroke="none"/>
<path d="M574 49.500l-5-4v2.500h-6v3h6v2.500z" fill="#a4a4aa" stroke="none"/>
<rect x="583" y="44.5" width="7" height="7" fill="#d8ecf4" stroke="#444" stroke-width=".8"/><path d="M585 50l3-4" stroke="#27a"/><path d="M580 48l4 7-1-4 3 1z" fill="#eee" stroke="#666" stroke-width=".7"/>
<rect x="598" y="46" width="7" height="7" fill="#dcdcde" stroke="#b4b4b8"/>
<path d="M616 44v11l2.500-2.500 2 4 1.500-1-2-4h3.500z" fill="#111" stroke="none"/>
<circle cx="636" cy="49.5" r="5.5" fill="#0a2288" stroke="none"/><text x="634.7" y="53" font-size="8" font-weight="bold" style="fill:#fff" stroke="none">i</text>
<path d="M648 48l2-3h1l1 3v5h-4zM653 48l1-3h1l2 3v5h-4z" fill="#111" stroke="none"/>
<circle cx="670" cy="47" r="2.5" fill="#3a7ae0" stroke="none"/><text x="665" y="55.500" font-size="6" stroke="none" style="fill:#222">X Y</text>
<path d="M682 55h11M682 52h11M685 49h5M687.500 49v-4" stroke-width=".9"/>
<path d="M703 47l3-3-2 4 2-1-4 5 1-3-2 1zM702 51l-2 3" stroke="#a8a8ae" fill="#a8a8ae" stroke-width=".7"/>
<line x1="610.5" y1="42" x2="610.5" y2="59" stroke="#bdbdc2"/>
</g>
<!-- toolbar 2 -->
<text x="11" y="74" font-size="8.6" style="fill:#222" textLength="19" lengthAdjust="spacingAndGlyphs">Editor</text><path d="M35 69h7l-3.500 4z" fill="#111"/>
<path d="M58 66v10l6-5z" fill="#aaa"/><path d="M78 76l2-4 6-6 3 2-6 6z" fill="#9c9ca2"/><path d="M93 69h7l-3.500 4z" fill="#222"/>
<g stroke="#bdbdc2"><line x1="51.5" y1="63" x2="51.5" y2="80"/><line x1="72.5" y1="63" x2="72.5" y2="80"/><line x1="264.5" y1="63" x2="264.5" y2="80"/><line x1="431.5" y1="63" x2="431.5" y2="80"/><line x1="469.5" y1="63" x2="469.5" y2="80"/><line x1="489.5" y1="63" x2="489.5" y2="80"/></g>
<text x="108" y="74" font-size="8.4" style="fill:#a2a2a8" textLength="18" lengthAdjust="spacingAndGlyphs">Task:</text>
<rect x="130.5" y="65.5" width="128" height="12" fill="#e6e5ea" stroke="#9a9aa2"/><text x="134" y="74.5" font-size="8.4" style="fill:#a8a8ae" textLength="69" lengthAdjust="spacingAndGlyphs">Create New Feature</text>
<rect x="247" y="66.5" width="10" height="10" fill="#e8e8ec" stroke="#aaa"/><path d="M250 70h5l-2.500 3z" fill="#aaa"/>
<text x="271" y="74" font-size="8.4" style="fill:#a2a2a8" textLength="24" lengthAdjust="spacingAndGlyphs">Target:</text>
<rect x="300.5" y="65.5" width="123" height="12" fill="#e6e5ea" stroke="#9a9aa2"/><rect x="413" y="66.5" width="10" height="10" fill="#e8e8ec" stroke="#aaa"/><path d="M416 70h5l-2.500 3z" fill="#aaa"/>
<path d="M436 76l9-10M438 70l2 2 2-4" stroke="#b2b2b8" fill="none"/><circle cx="457" cy="71" r="5" fill="none" stroke="#b0b0b6"/><circle cx="457" cy="70" r="1" fill="#a0a0a6"/>
<rect x="473.5" y="67" width="10" height="8" fill="#eee" stroke="#a8a8ae"/><path d="M478.500 67v8" stroke="#a8a8ae"/><rect x="494" y="67" width="10" height="8" fill="#eee" stroke="#a8a8ae"/><path d="M495 74l3-3 2 2 2-2 2 3" stroke="#a8a8ae" fill="none"/>

<!-- map scrollbars -->
<rect x="888" y="83" width="12" height="637" fill="#f1f1f3"/>
<rect x="888.5" y="84" width="10" height="10" fill="#e2e2e6" stroke="#999"/><path d="M890.500 91h6l-3-4z" fill="#111"/>
<rect x="888" y="219" width="10" height="4" fill="#e4e4e8" stroke="#aaa" stroke-width=".6"/>
<rect x="888.5" y="683" width="10" height="10" fill="#e2e2e6" stroke="#999"/><path d="M890.500 686h6l-3 4z" fill="#111"/>
<rect x="303" y="694" width="597" height="13" fill="#f1f1f3"/>
<line x1="405.5" y1="694" x2="405.5" y2="706" stroke="#999"/>
<rect x="877" y="696" width="10" height="10" fill="#e2e2e6" stroke="#999"/><path d="M881 698v6l4-3z" fill="#111"/>
<!-- status bar -->
<rect x="0" y="707" width="900" height="13" fill="#e4e3e8"/>
<line x1="0" y1="707.5" x2="900" y2="707.5" stroke="#c8c8ce"/>
<rect x="668.5" y="709" width="15" height="10.5" fill="none" stroke="#b4b4ba"/>
<path d="M685.5 720v-11H900" fill="none" stroke="#8f8f96"/>
<text x="687" y="717" font-size="8.6" style="fill:#222;white-space:pre" textLength="102" lengthAdjust="spacingAndGlyphs">4837577.44  6579665.57 Feet</text>

<!-- TOC panel -->
<rect x="0" y="83" width="160" height="145" fill="#e4e3e8"/>
<line x1="4" y1="87" x2="148" y2="87" stroke="#aaa"/><line x1="4" y1="90" x2="148" y2="90" stroke="#aaa"/>
<path d="M152.500 86.500l5 5M157.500 86.500l-5 5" stroke="#111" stroke-width="1.3"/>
<rect x="6.5" y="97.5" width="150" height="130" fill="#fff" stroke="#a0a0a6"/>
<rect x="10.5" y="100" width="6" height="6" fill="#fff" stroke="#9a9aa0"/><path d="M12 103h3" stroke="#333"/>
<path d="M21 105l4-8h7l-2 8z" fill="#d8c020" stroke="#333" stroke-width=".7"/><path d="M21 103h9M22 100h9" stroke="#333" stroke-width=".6"/>
<text x="35" y="106" font-size="8.8" font-weight="bold" style="fill:#111" textLength="27" lengthAdjust="spacingAndGlyphs">Layers</text>
<g class="tr">
<text x="48" y="117" textLength="41" lengthAdjust="spacingAndGlyphs">HotSpots1M</text><text x="48" y="129" textLength="63" lengthAdjust="spacingAndGlyphs">Response Stations</text><text x="48" y="140" textLength="31" lengthAdjust="spacingAndGlyphs">911 Calls</text><text x="48" y="151" textLength="43" lengthAdjust="spacingAndGlyphs">Service Area</text><text x="48" y="163" textLength="81.5" lengthAdjust="spacingAndGlyphs">Response Service Areas</text><text x="48" y="174" textLength="42" lengthAdjust="spacingAndGlyphs">Major Roads</text><text x="48" y="185" textLength="40" lengthAdjust="spacingAndGlyphs">Call Surface</text><text x="48" y="197" textLength="26" lengthAdjust="spacingAndGlyphs">Oregon</text>
</g>
<g fill="#fff" stroke="#9a9aa0">
<rect x="23.5" y="112.5" width="6" height="6"/><rect x="23.5" y="123.5" width="6" height="6"/><rect x="23.5" y="134.5" width="6" height="6"/><rect x="23.5" y="145.5" width="6" height="6"/><rect x="23.5" y="157.5" width="6" height="6"/><rect x="23.5" y="168.5" width="6" height="6"/><rect x="23.5" y="179.5" width="6" height="6"/><rect x="23.5" y="190.5" width="6" height="6"/>
</g>
<path d="M25 115.500h3M26.500 114v3M25 126.500h3M26.500 125v3M25 137.500h3M26.500 136v3M25 148.500h3M26.500 147v3M25 160.500h3M26.500 159v3M25 171.500h3M26.500 170v3M25 182.500h3M26.500 181v3M25 193.500h3M26.500 192v3" stroke="#222"/>
<g fill="#fff" stroke="#555">
<rect x="35" y="111" width="7" height="7"/><rect x="35" y="122.5" width="7" height="7"/><rect x="35" y="133.5" width="7" height="7"/><rect x="35" y="144.5" width="7" height="7"/><rect x="35" y="156" width="7" height="7"/><rect x="35" y="167" width="7" height="7"/><rect x="35" y="178" width="7" height="7"/><rect x="35" y="189.5" width="7" height="7"/>
</g>
<path d="M36.500 114.500l1.500 2 3-4M36.500 126l1.500 2 3-4M36.500 137l1.500 2 3-4M36.500 148l1.500 2 3-4M36.500 159.500l1.500 2 3-4M36.500 170.500l1.500 2 3-4M36.500 181.500l1.500 2 3-4M36.500 193l1.500 2 3-4" fill="none" stroke="#111" stroke-width="1.1"/>
<rect x="0" y="228" width="4" height="480" fill="#d8d8dd"/>

<!-- MODEL WINDOW -->
<path d="M4 226q0-4 4-4H299q4 0 4 4V706H4Z" fill="#e6e5ea" stroke="#8e8ea0" stroke-width="1.2"/>
<path d="M5 226q0-3 3-3H299q3 0 3 3V243H5Z" fill="url(#wt)"/>
<rect x="7" y="229" width="3" height="3" fill="#0000d8"/><rect x="7" y="236" width="3" height="3" fill="#0000d8"/><rect x="16" y="231" width="3" height="3" fill="#00c000"/><path d="M10 231l6 1.500M10 237l6-4" stroke="#e0c000" stroke-width="1.2"/>
<text x="22" y="237" font-size="10.4" font-weight="bold" style="fill:#111" textLength="81" lengthAdjust="spacingAndGlyphs">Find 911 Hot Spots</text>
<rect x="253.5" y="226.5" width="14" height="14" rx="2" fill="#c8c8d8" stroke="#8888a0"/><path d="M257 236h5" stroke="#556" stroke-width="1.6"/>
<rect x="270" y="226.5" width="14" height="14" rx="2" fill="#d4d4e2" stroke="#8888a0"/><rect x="273" y="230" width="8" height="7" fill="none" stroke="#556" stroke-width="1.2"/>
<rect x="286" y="226.5" width="13.5" height="14" rx="2" fill="#d8604c" stroke="#b0887c"/><path d="M289 229.500l7 8M296 229.500l-7 8" stroke="#fff" stroke-width="1.8"/>
<line x1="6" y1="243.5" x2="301" y2="243.5" stroke="#a8a8b8"/>
<g class="mn"><text x="9" y="252.5" textLength="20" lengthAdjust="spacingAndGlyphs">Model</text><text x="38" y="252.5" textLength="12" lengthAdjust="spacingAndGlyphs">Edit</text><text x="59" y="252.5" textLength="15" lengthAdjust="spacingAndGlyphs">View</text><text x="83" y="252.5" textLength="27" lengthAdjust="spacingAndGlyphs">Window</text><text x="118" y="252.5" textLength="15" lengthAdjust="spacingAndGlyphs">Help</text></g>
<line x1="6" y1="257.5" x2="301" y2="257.5" stroke="#c8c8ce"/>
<!-- model toolbar -->
<g class="tb">
<rect x="10" y="260" width="15" height="15"/><rect x="32" y="260" width="15" height="15"/><rect x="54" y="260" width="15" height="15"/><rect x="71" y="260" width="15" height="15"/><rect x="87" y="260" width="15" height="15"/><rect x="108" y="260" width="15" height="15"/><rect x="130" y="260" width="15" height="15"/><rect x="146" y="260" width="15" height="15"/><rect x="162" y="260" width="15" height="15"/><rect x="178" y="260" width="15" height="15"/><rect x="200" y="260" width="15" height="15"/><rect x="216" y="260" width="15" height="15"/><rect x="232" y="260" width="15" height="15"/><rect x="249" y="260" width="15" height="15"/><rect x="270" y="260" width="15" height="15"/><rect x="287" y="260" width="15" height="15"/>
</g>
<rect x="13" y="262" width="10" height="11" fill="#111"/><rect x="15" y="262" width="6" height="3" fill="#ccc"/><rect x="15" y="268" width="6" height="4" fill="#445"/>
<path d="M34 268h11v4h-11zM36 263h7v5h-7z" fill="#bbb" stroke="#222"/>
<path d="M58 262l4 7M66 262l-4 7" stroke="#335" fill="none"/><circle cx="59" cy="271" r="1.8" fill="none" stroke="#36a"/><circle cx="65" cy="271" r="1.8" fill="none" stroke="#36a"/>
<rect x="74" y="263" width="6" height="7" fill="#8a8ad0" stroke="#224"/><rect x="78" y="265" width="6" height="7" fill="#aab" stroke="#224"/>
<rect x="90" y="263" width="9" height="10" fill="#888" stroke="#222"/><rect x="94" y="266" width="6" height="7" fill="#ccd" stroke="#224"/>
<path d="M115.500 262v5M112 264h7" stroke="#000" stroke-width="2.4"/><path d="M110 268h11l-5.500 5z" fill="#ffe020" stroke="#222" stroke-width=".6"/>
<rect x="132.5" y="262" width="5" height="5" fill="#00309a"/><rect x="139" y="262" width="5" height="5" fill="#107a28"/><rect x="132.5" y="269" width="5" height="5" fill="#107a28"/><rect x="139" y="269" width="5" height="5" fill="#00309a"/>
<rect x="149" y="262.5" width="9" height="9" fill="#fff" stroke="#223"/><path d="M149 266v-4h4zM158 268v4h-4z" fill="#123"/>
<path d="M165 263l2 2h-2zM174 263l-2 2h2zM165 272l2-2h-2zM174 272l-2-2h2zM181 265v-2h2zM190 265v-2h-2zM181 270v2h2zM190 270v2h-2z" fill="#222" stroke="#222" stroke-width=".8"/>
<circle cx="207" cy="266.5" r="4.3" fill="#fff" stroke="#222"/><path d="M205 266.500h4M207 264.500v4" stroke="#222"/><path d="M210 270l3 3" stroke="#c00" stroke-width="2"/>
<path d="M219 268v-3q1-1 2 0v-2q1-1 2 0v0q1-1 2 0v1q1-1 2 0v5q0 3-4 3t-5-4q1-1 1 0z" fill="#fff" stroke="#222" stroke-width=".8"/>
<circle cx="239" cy="266.5" r="4.5" fill="#ddd" stroke="#222" stroke-width="1.2"/><path d="M236.500 266.500h5M239 264v5" stroke="#111"/><path d="M243 271l3 2" stroke="#c00" stroke-width="2"/>
<rect x="252" y="263" width="9" height="8" fill="#333"/><rect x="253" y="264" width="3" height="3" fill="#ffd030"/><rect x="257" y="264" width="3" height="3" fill="#7060d0"/><rect x="253" y="268" width="3" height="2" fill="#ffe060"/><rect x="257" y="268" width="3" height="2" fill="#e0c030"/>
<path d="M275 262v10l2.500-2 2 4 1-1-2-4h3z" fill="#111"/>
<path d="M290 273h3v-6h5v-4" fill="none" stroke="#333"/><rect x="288.5" y="271" width="3" height="3" fill="#1a6a50"/><rect x="296.5" y="262" width="3" height="3" fill="#224"/>
<g stroke="#bdbdc2"><line x1="28.5" y1="259" x2="28.5" y2="276"/><line x1="50.5" y1="259" x2="50.5" y2="276"/><line x1="105.5" y1="259" x2="105.5" y2="276"/><line x1="126.5" y1="259" x2="126.5" y2="276"/><line x1="196.5" y1="259" x2="196.5" y2="276"/><line x1="267.5" y1="259" x2="267.5" y2="276"/></g>
<!-- canvas -->
<rect x="6" y="278" width="284" height="414" fill="#fff" stroke="#9a9aa4"/>
<g class="sh"><ellipse cx="62" cy="323" rx="34" ry="21"/><ellipse cx="238" cy="358" rx="34" ry="21"/><ellipse cx="156" cy="379" rx="34" ry="21"/><ellipse cx="157" cy="494" rx="36" ry="21"/><ellipse cx="239" cy="511" rx="29" ry="18"/><ellipse cx="153" cy="612" rx="36" ry="23"/><ellipse cx="79" cy="656" rx="37" ry="24"/>
<rect x="127" y="303" width="61" height="37"/><rect x="126" y="419" width="60" height="39"/><rect x="126" y="530" width="60" height="39"/><rect x="209" y="637" width="60" height="37"/></g>
<path class="ar" d="M94 321H125"/><path class="ar" d="M155 338V356"/><path class="ar" d="M187 333L208 343"/><path class="ar" d="M154 398V417"/><path class="ar" d="M97 443L124 440"/><path class="ar" d="M87 482L124 457"/><path class="ar" d="M155 456V471"/><path class="ar" d="M177 457L219 494"/><path class="ar" d="M155 513V528"/><path class="ar" d="M105 548H124"/><path class="ar" d="M153 567V586"/><path class="ar" d="M180 625L207 638"/><path class="ar" d="M237 526V635"/><path class="ar" d="M207 654H114"/>
<g class="e">
<ellipse cx="60" cy="321" rx="34" ry="21" fill="#0d8fc0"/><ellipse cx="71" cy="548" rx="34" ry="21" fill="#0d8fc0"/>
<ellipse cx="65" cy="396" rx="33" ry="22" fill="#00ccff"/><ellipse cx="63" cy="447" rx="33" ry="23" fill="#00ccff"/><ellipse cx="63" cy="496" rx="33" ry="21" fill="#00ccff"/>
<ellipse cx="235" cy="356" rx="34" ry="21" fill="#66cc66"/><ellipse cx="154" cy="377" rx="34" ry="21" fill="#66cc66"/><ellipse cx="155" cy="492" rx="36" ry="21" fill="#66cc66"/><ellipse cx="151" cy="609" rx="36" ry="23" fill="#66cc66"/><ellipse cx="77" cy="653" rx="37" ry="24" fill="#66cc66"/>
<ellipse cx="237" cy="509" rx="29" ry="18" fill="#00ffcc"/>
</g>
<rect class="b" x="125" y="301" width="61" height="37"/><rect class="b" x="124" y="417" width="60" height="39"/><rect class="b" x="124" y="528" width="60" height="39"/><rect class="b" x="207" y="635" width="60" height="37"/>
<g>
<text class="nd" x="60" y="320">911 Call</text><text class="nd" x="60" y="329">Incidents</text>
<text class="nd" x="155.5" y="313">Collect Events</text><text class="nd" x="155.5" y="322">with</text><text class="nd" x="155.5" y="331">Rendering</text>
<text class="nd" x="235" y="354">Weighted</text><text class="nd" x="235" y="363">Calls Layer</text>
<text class="nd" x="154" y="375">Weighted</text><text class="nd" x="154" y="384">Calls</text>
<text class="nd" x="65" y="399">Input Field</text>
<text class="nd" x="154" y="430">Hot Spot</text><text class="nd" x="154" y="439">Analysis</text><text class="nd" x="154" y="448">(Getis-Ord Gi*)</text>
<text class="nd" x="63" y="445">Fixed</text><text class="nd" x="63" y="455">Distance</text>
<text class="nd" x="63" y="499">One Mile</text>
<text class="nd" x="155" y="490">911 Call Hot</text><text class="nd" x="155" y="499">Spots</text>
<text class="nd" x="237" y="507">Results</text><text class="nd" x="237" y="516">Field</text>
<text class="nd" x="71" y="551">Study Area</text>
<text class="nd" x="154" y="551">Clip</text>
<text class="nd" x="151" y="607">Clipped Hot</text><text class="nd" x="151" y="617">Spots</text>
<text class="nd" x="77" y="652">Rendered</text><text class="nd" x="77" y="662">Hot Spots</text>
<text class="nd" x="237" y="653">Z Score</text><text class="nd" x="237" y="662">Rendering</text>
<text class="lb" x="200" y="319">Model Tool</text><text class="lb" x="199" y="439">Script Tool</text><text class="lb" x="202" y="549">System Tool</text><text class="lb" x="204" y="622">VB EXE tool</text>
</g>
<!-- tool badges -->
<rect x="150" y="302" width="3" height="3" fill="#0000d0"/><rect x="158" y="305" width="3" height="3" fill="#00c800"/><path d="M151 304l8 3M150 311l6-5" stroke="#e0c000" stroke-width=".9" fill="none"/>
<path d="M151 421q3-3 6-1-4 1-1 2t1 3q-3 2-6 0 3 0 2-1t-2-3" fill="#8c8cc8" stroke="#445" stroke-width=".6"/>
<path d="M149 537l6-6M151 530l6 3-2 2-5-3z" fill="#b08030" stroke="#553"/>
<path d="M233 637q3-2 6-1-3 1-1 2t1 3q-1 1-1 3-3 1-5 0 3-1 2-2t-2-5" fill="#8c8cc8" stroke="#445" stroke-width=".6"/>
<!-- vert scrollbar -->
<rect x="290" y="278" width="12" height="414" fill="url(#vb)"/>
<rect x="291" y="279" width="10" height="10" fill="#e8e8ee" stroke="#a0a0aa"/><path d="M293.500 285l2.500-3 2.500 3" fill="none" stroke="#222" stroke-width="1.2"/>
<rect x="291" y="680" width="10" height="12" fill="#e8e8ee" stroke="#a0a0aa"/><path d="M293.500 685l2.500 3 2.500-3" fill="none" stroke="#222" stroke-width="1.2"/>
<rect x="293" y="482" width="6" height="6" fill="#d0d0d8"/>
<!-- horiz scrollbar -->
<rect x="6" y="693" width="284" height="11" fill="#f4f4f6"/>
<rect x="7" y="693" width="10" height="10" fill="#e8e8ee" stroke="#a0a0aa"/><path d="M13 695.500l-3 2.500 3 2.500" fill="none" stroke="#222" stroke-width="1.2"/>
<rect x="19" y="693" width="252" height="10" rx="1" fill="url(#hb)" stroke="#b4b4bc"/>
<rect x="141" y="695" width="6" height="6" fill="#d0d0d8"/>
<rect x="278" y="693" width="10" height="10" fill="#e8e8ee" stroke="#a0a0aa"/><path d="M282 695.500l3 2.500-3 2.500" fill="none" stroke="#222" stroke-width="1.2"/>
<path d="M299 696v6M296 699v3M293 702h9" stroke="#b0b0b8" stroke-dasharray="1 1"/>
</svg>
</body></html>
